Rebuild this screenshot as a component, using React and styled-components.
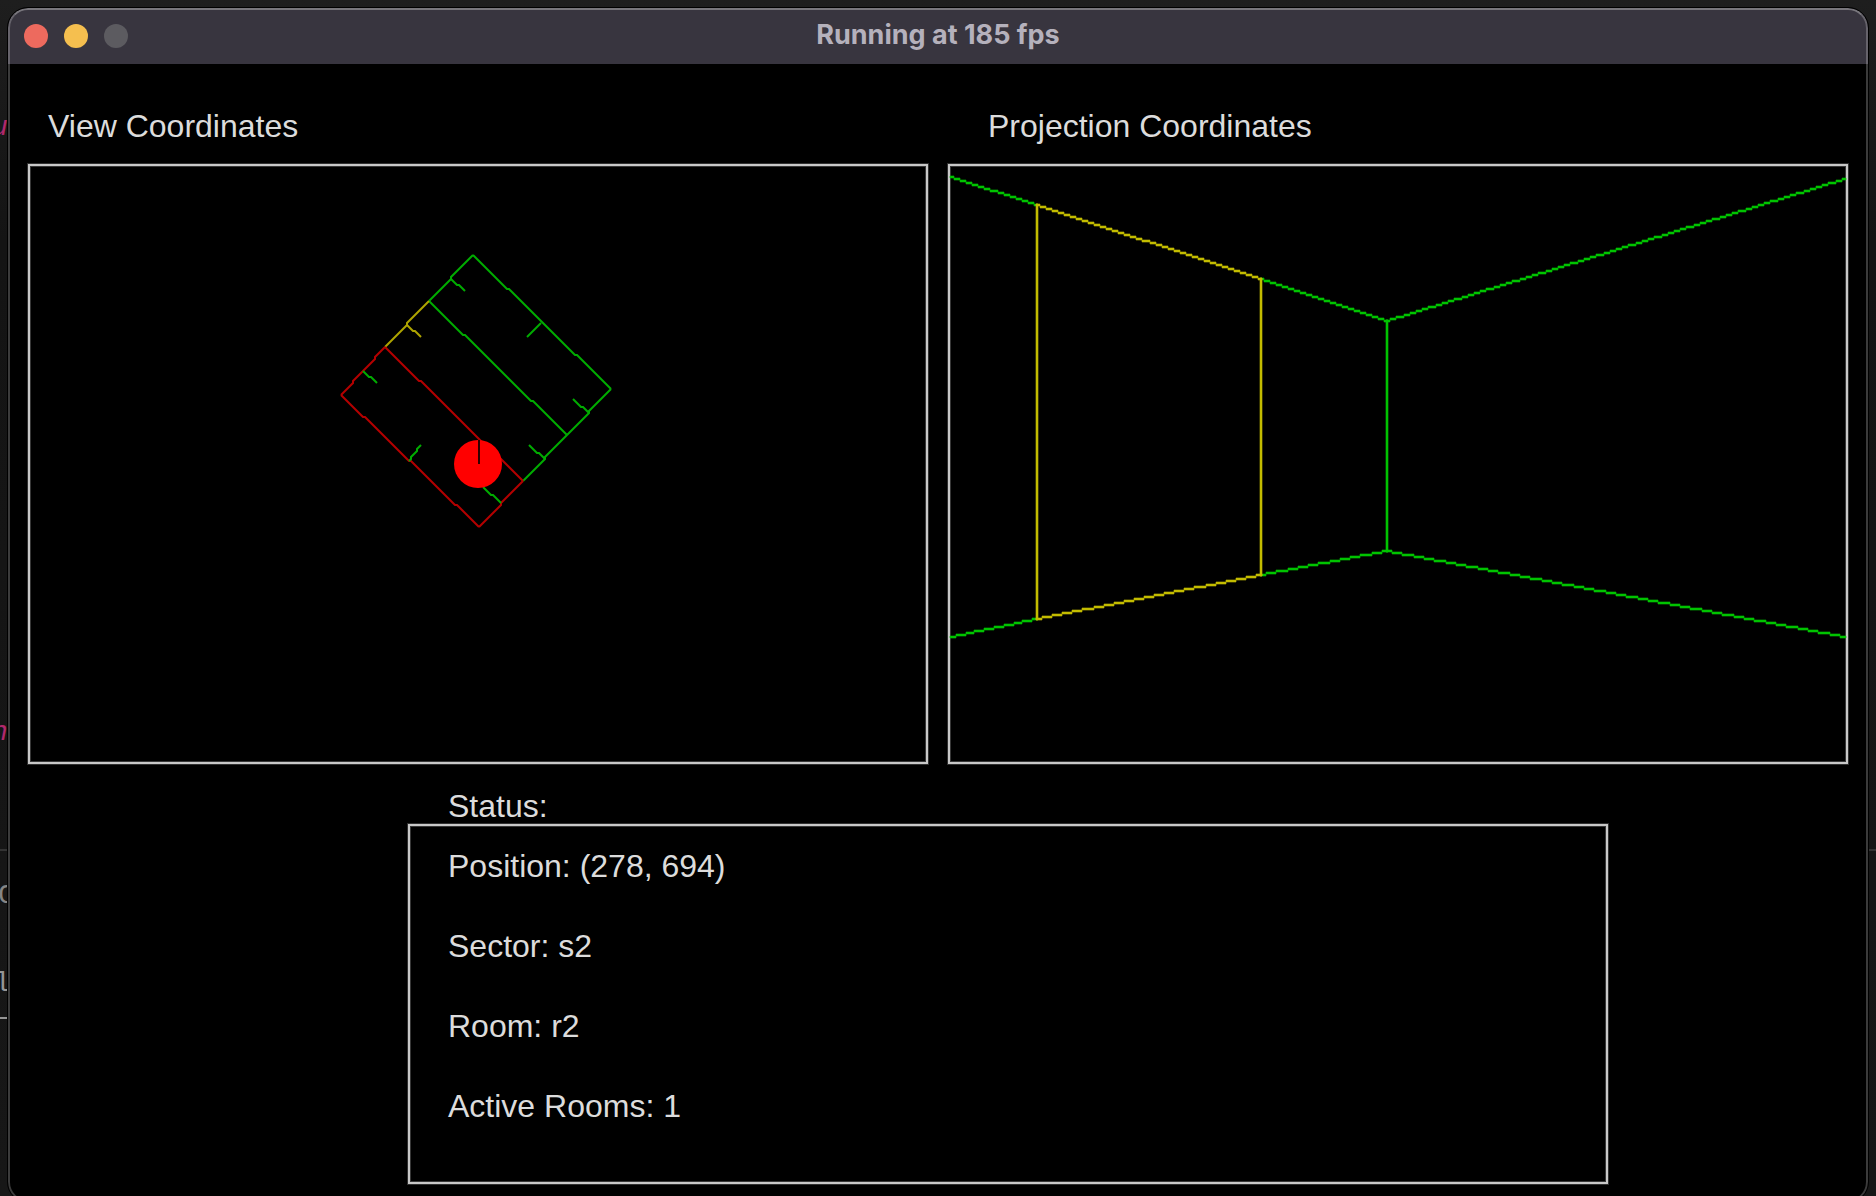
import React from "react";
import styled, { createGlobalStyle } from "styled-components";

const GlobalStyle = createGlobalStyle`
  *, *::before, *::after { box-sizing: border-box; }
  body {
    margin: 0;
    background: #181818;
    font-family: "Liberation Sans", Arial, sans-serif;
  }
`;

const GREEN = "#00c400";
const YELLOW = "#c4bc00";
const MAP_GREEN = "#00ac00";
const MAP_YELLOW = "#aea400";
const MAP_RED = "#b40000";

const Desktop = styled.div`
  position: relative;
  height: 100vh;
  overflow: hidden;
  background: linear-gradient(#1e1e1e, #141414 20%, #171717);
`;

/* Editor that lies behind the window; only its edge shows. */
const Backdrop = styled.div`
  position: absolute;
  inset: 0;
  overflow: hidden;
`;

const Rule = styled.div`
  position: absolute;
  left: 0;
  top: ${(p) => p.$top}px;
  width: ${(p) => p.$width};
  height: 2px;
  background: ${(p) => p.$color};
`;

const CodeGlyph = styled.span`
  position: absolute;
  left: ${(p) => p.$left}px;
  top: ${(p) => p.$top}px;
  font: ${(p) => (p.$italic ? "italic" : "normal")} 28px/32px "Liberation Mono", monospace;
  color: ${(p) => p.$color};
`;

const Window = styled.main`
  position: relative;
  margin: 8px 8px 0;
  border-radius: 20px;
  overflow: hidden;
  background: #000;
  color: #dcdcdc;
  outline: 1px solid #000;

  &::after {
    content: "";
    position: absolute;
    inset: 0;
    border: 2px solid rgba(255, 255, 255, 0.23);
    border-top-color: rgba(255, 255, 255, 0.32);
    border-radius: 20px;
    pointer-events: none;
  }
`;

const TitleBar = styled.header`
  display: grid;
  grid-template-columns: 1fr auto 1fr;
  align-items: center;
  height: 56px;
  padding: 0 16px;
  background: #38353f;
`;

const Lights = styled.div`
  display: flex;
  gap: 16px;
`;

const Light = styled.button`
  width: 24px;
  height: 24px;
  padding: 0;
  border: 0;
  border-radius: 50%;
  background: ${(p) => p.$color};
`;

const Title = styled.h1`
  margin: 0;
  padding-bottom: 3px;
  font: 700 27px/32px Inter, sans-serif;
  color: #b5b1bc;
`;

const Content = styled.div`
  padding: 46px 20px 18px;
`;

const Views = styled.div`
  display: flex;
  gap: 20px;
`;

const View = styled.section`
  flex: 1;
  min-width: 0;
`;

const Label = styled.h2`
  margin: 0 0 ${(p) => p.$gap}px;
  padding-left: ${(p) => p.$indent}px;
  font-size: 32px;
  font-weight: 400;
  line-height: 32px;
`;

const Frame = styled.div`
  border: 2px solid #c8c8c8;
  box-shadow: 0 0 0 1px #303030, inset 0 0 0 1px #383838;
`;

const Scene = styled.svg`
  display: block;
  width: 100%;
  height: auto;
  overflow: visible;
`;

const Status = styled.section`
  margin: 26px 240px 0 380px;
`;

const StatusList = styled.ul`
  display: flex;
  flex-direction: column;
  gap: 48px;
  margin: 0;
  padding: 24px 38px 60px;
  list-style: none;
  font-size: 32px;
  line-height: 32px;
`;

/* Cells that a one-cell-wide line passes through. */
function cells([x0, y0, x1, y1]) {
  const dx = Math.abs(x1 - x0);
  const dy = Math.abs(y1 - y0);
  const sx = Math.sign(x1 - x0);
  const sy = Math.sign(y1 - y0);
  const out = [];
  let err = dx - dy;
  let x = x0;
  let y = y0;
  for (;;) {
    out.push([x, y]);
    if (x === x1 && y === y1) return out;
    const e2 = 2 * err;
    if (e2 > -dy) {
      err -= dy;
      x += sx;
    }
    if (e2 < dx) {
      err += dx;
      y += sy;
    }
  }
}

function MapLine({ points, color }) {
  const path = cells(points).map(([x, y]) => `${x * 2},${y * 2 + 1}`);
  return <polyline points={path.join(" ")} fill="none" stroke={color} strokeWidth="2" />;
}

function WallLine({ points, color }) {
  const path = cells(points).map(([x, y]) => `M${x * 2 - 1} ${y * 2}h2v2h-2z`);
  return <path d={path.join("")} fill={color} stroke={color} strokeWidth="0.6" />;
}

const mapLines = [
  [MAP_GREEN, [221, 44, 290, 111]],
  [MAP_GREEN, [199, 67, 268, 134]],
  [MAP_GREEN, [221, 44, 199, 67]],
  [MAP_GREEN, [290, 111, 246, 157]],
  [MAP_YELLOW, [199, 67, 177, 90]],
  [MAP_RED, [177, 90, 246, 157]],
  [MAP_RED, [177, 90, 155, 114]],
  [MAP_RED, [155, 114, 224, 180]],
  [MAP_RED, [224, 180, 246, 157]],
  [MAP_GREEN, [210, 56, 217, 62]],
  [MAP_YELLOW, [188, 79, 195, 85]],
  [MAP_GREEN, [166, 102, 173, 108]],
  [MAP_GREEN, [189, 147, 195, 139]],
  [MAP_GREEN, [255, 78, 248, 85]],
  [MAP_GREEN, [279, 123, 271, 116]],
  [MAP_GREEN, [257, 146, 249, 139]],
  [MAP_GREEN, [235, 168, 226, 160]],
];

const wallLines = [
  [GREEN, [0, 5, 43, 19]],
  [GREEN, [0, 235, 43, 226]],
  [GREEN, [155, 56, 218, 77]],
  [GREEN, [155, 204, 218, 192]],
  [GREEN, [218, 77, 218, 192]],
  [GREEN, [218, 77, 447, 6]],
  [GREEN, [218, 192, 447, 235]],
  [YELLOW, [43, 19, 155, 56]],
  [YELLOW, [43, 226, 155, 204]],
  [YELLOW, [43, 19, 43, 226]],
  [YELLOW, [155, 56, 155, 204]],
];

const statusRows = [
  "Position: (278, 694)",
  "Sector: s2",
  "Room: r2",
  "Active Rooms: 1",
];

export default function App() {
  return (
    <Desktop>
      <GlobalStyle />
      <Backdrop aria-hidden="true">
        <CodeGlyph $left={-9} $top={112} $color="#b0286c" $italic>u</CodeGlyph>
        <CodeGlyph $left={-9} $top={717} $color="#b0286c" $italic>n</CodeGlyph>
        <Rule $top={849} $width="100%" $color="#333" />
        <CodeGlyph $left={-2} $top={880} $color="#858585">C</CodeGlyph>
        <CodeGlyph $left={-6} $top={968} $color="#959595">l</CodeGlyph>
        <Rule $top={1017} $width="8px" $color="#959595" />
      </Backdrop>
      <Window>
        <TitleBar>
          <Lights>
            <Light $color="#ed6a5e" aria-label="Close" />
            <Light $color="#f5bf4f" aria-label="Minimize" />
            <Light $color="#5c5b60" aria-label="Zoom" disabled />
          </Lights>
          <Title>Running at 185 fps</Title>
        </TitleBar>
        <Content>
          <Views>
            <View>
              <Label $gap={22} $indent={20}>View Coordinates</Label>
              <Frame>
                <Scene viewBox="-1 0 896 596" role="img" aria-label="Map of the rooms">
                  {mapLines.map(([color, points]) => (
                    <MapLine key={points.join()} color={color} points={points} />
                  ))}
                  <circle cx="447" cy="298" r="24" fill="#f00" />
                  <path d="M448 274v24" stroke="#300000" strokeWidth="2" />
                </Scene>
              </Frame>
            </View>
            <View>
              <Label $gap={22} $indent={40}>Projection Coordinates</Label>
              <Frame>
                <Scene viewBox="-1 0 896 596" role="img" aria-label="Projected walls">
                  {wallLines.map(([color, points]) => (
                    <WallLine key={points.join()} color={color} points={points} />
                  ))}
                </Scene>
              </Frame>
            </View>
          </Views>
          <Status>
            <Label $gap={2} $indent={40}>Status:</Label>
            <Frame>
              <StatusList>
                {statusRows.map((row) => (
                  <li key={row}>{row}</li>
                ))}
              </StatusList>
            </Frame>
          </Status>
        </Content>
      </Window>
    </Desktop>
  );
}
